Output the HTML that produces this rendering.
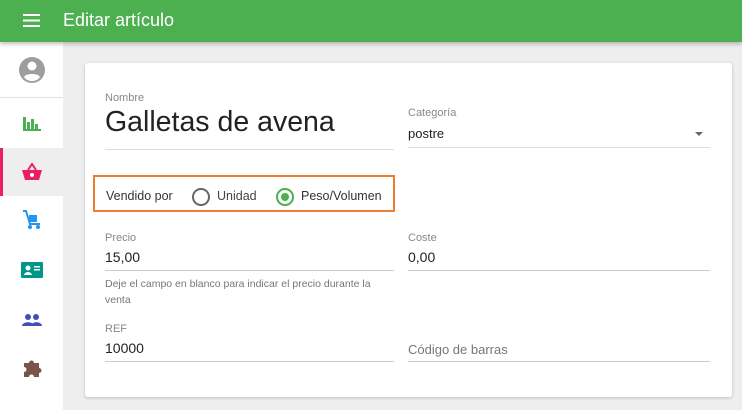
<!DOCTYPE html>
<html><head><style>
body{margin:0;width:742px;height:410px;overflow:hidden;background:#eeeeee;font-family:"Liberation Sans",Arial,sans-serif;position:relative}
.hdr{position:absolute;left:0;top:0;width:742px;height:42px;background:#4caf50;box-shadow:0 2px 4px rgba(0,0,0,.25);z-index:2}
.hdr .t{position:absolute;left:63px;top:10px;color:#fff;font-size:18px}
.side{position:absolute;left:0;top:42px;width:63px;height:368px;background:#fff}
.ic{position:absolute;left:0;width:63px;height:48px;display:flex;align-items:center;justify-content:center}
.card{position:absolute;left:85px;top:63px;width:647px;height:334px;background:#fff;border-radius:3px;box-shadow:0 1px 3px rgba(0,0,0,.2)}
.a{position:absolute;white-space:nowrap}
.lbl{font-size:11px;color:#888}
.val{font-size:14px;color:#222}
.line{position:absolute;height:1px;background:#ddd}
</style></head><body>
<div class="hdr">
<svg style="position:absolute;left:23px;top:14px" width="17" height="13"><rect y="0" width="17" height="2" fill="#fff"/><rect y="5.5" width="17" height="2" fill="#fff"/><rect y="11" width="17" height="2" fill="#fff"/></svg>
<div class="t">Editar artículo</div></div>
<div class="side">
<div class="ic" style="top:4px"><svg width="28" height="28" viewBox="0 0 28 28"><circle cx="14" cy="14" r="13" fill="#9e9e9e"/><circle cx="14" cy="10" r="4.5" fill="#fff"/><path d="M6 21c2-4 14-4 16 0c-2 3-5 4-8 4s-6-1-8-4z" fill="#fff"/></svg></div>
<div style="position:absolute;top:55px;left:0;width:63px;height:1px;background:#e0e0e0"></div>
<div class="ic" style="top:58px"><svg width="18" height="14"><rect x="0" y="0" width="3" height="14" fill="#4caf50"/><rect x="4" y="5" width="3" height="9" fill="#4caf50"/><rect x="8" y="2" width="3" height="12" fill="#4caf50"/><rect x="12" y="7" width="3" height="7" fill="#4caf50"/><rect x="0" y="12" width="18" height="2" fill="#4caf50"/></svg></div>
<div class="ic" style="top:106px;background:#eee"><div style="position:absolute;left:0;top:0;width:3px;height:48px;background:#e91e63"></div><svg width="20" height="18" viewBox="0 0 20 18"><path d="M6 7l4-6 4 6" stroke="#e91e63" stroke-width="2" fill="none"/><path d="M0 7h20l-3 10H3z" fill="#e91e63"/><circle cx="10" cy="12" r="2" fill="#fff"/></svg></div>
<div class="ic" style="top:154px"><svg width="20" height="20" viewBox="0 0 20 20"><path d="M1 1h3l4 13h10" stroke="#2196f3" stroke-width="2" fill="none"/><rect x="7" y="5" width="8" height="7" fill="#2196f3"/><circle cx="8" cy="17" r="2" fill="#2196f3"/><circle cx="16" cy="17" r="2" fill="#2196f3"/></svg></div>
<div class="ic" style="top:204px"><svg width="22" height="16"><rect width="22" height="16" rx="1" fill="#009688"/><circle cx="7" cy="6" r="2.5" fill="#fff"/><path d="M3 13c1-4 7-4 8 0z" fill="#fff"/><rect x="13" y="4" width="6" height="1.5" fill="#fff"/><rect x="13" y="7" width="6" height="1.5" fill="#fff"/></svg></div>
<div class="ic" style="top:254px"><svg width="20" height="12"><circle cx="6" cy="3" r="3" fill="#3f51b5"/><circle cx="14" cy="3" r="3" fill="#3f51b5"/><path d="M0 12c0-5 12-5 12 0z M9 12c0-5 11-5 11 0z" fill="#3f51b5"/></svg></div>
<div class="ic" style="top:302px"><svg width="20" height="20" viewBox="0 0 20 20"><path d="M2 5h5a2.5 2.5 0 015 0h5v5a2.5 2.5 0 010 5v4H12a2.5 2.5 0 00-5 0H2v-5a2.5 2.5 0 000-5z" fill="#795548"/></svg></div>
</div>
<div class="card">
<div class="a lbl" style="left:20px;top:29px">Nombre</div>
<div class="a" style="left:20px;top:43px;font-size:28.5px;color:#222">Galletas de avena</div>
<div class="line" style="left:20px;top:86px;width:289px"></div>
<div class="a lbl" style="left:323px;top:44px">Categoría</div>
<div class="a val" style="left:323px;top:63px;font-size:13px">postre</div>
<div class="a" style="left:610px;top:69px;width:0;height:0;border-left:4px solid transparent;border-right:4px solid transparent;border-top:4px solid #666"></div>
<div class="line" style="left:323px;top:84px;width:302px"></div>
<div class="a" style="left:8px;top:112px;width:302px;height:37px;border:2px solid #ed7d31;box-sizing:border-box"></div>
<div class="a" style="left:21px;top:126px;font-size:12.5px;color:#333">Vendido por</div>
<div class="a" style="left:107px;top:125px;width:14px;height:14px;border:2px solid #666;border-radius:50%"></div>
<div class="a" style="left:132px;top:126px;font-size:12.5px;color:#444">Unidad</div>
<div class="a" style="left:191px;top:125px;width:14px;height:14px;border:2px solid #4caf50;border-radius:50%"></div>
<div class="a" style="left:196px;top:130px;width:8px;height:8px;background:#4caf50;border-radius:50%"></div>
<div class="a" style="left:216px;top:126px;font-size:12.5px;color:#333">Peso/Volumen</div>
<div class="a lbl" style="left:20px;top:169px">Precio</div>
<div class="a val" style="left:20px;top:186px">15,00</div>
<div class="line" style="left:20px;top:207px;width:289px;background:#ccc"></div>
<div class="a" style="left:20px;top:213px;font-size:10.5px;color:#777;line-height:16px;white-space:normal;width:275px">Deje el campo en blanco para indicar el precio durante la venta</div>
<div class="a lbl" style="left:323px;top:169px">Coste</div>
<div class="a val" style="left:323px;top:186px">0,00</div>
<div class="line" style="left:323px;top:207px;width:302px;background:#ccc"></div>
<div class="a lbl" style="left:20px;top:260px">REF</div>
<div class="a val" style="left:20px;top:277px">10000</div>
<div class="line" style="left:20px;top:298px;width:289px;background:#ccc"></div>
<div class="a" style="left:323px;top:279px;font-size:13px;color:#777">Código de barras</div>
<div class="line" style="left:323px;top:298px;width:302px;background:#ccc"></div>
</div>
</body></html>
